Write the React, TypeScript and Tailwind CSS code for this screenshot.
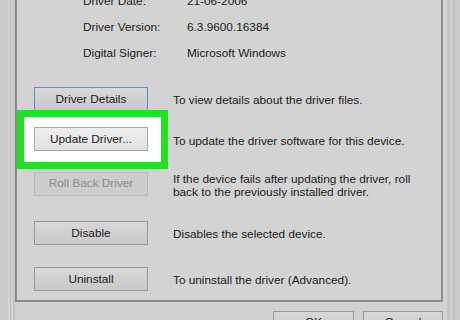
import React from "react";

const Btn = ({
  children,
  variant = "normal",
  w = "w-[114px]",
  h = "h-[24px]",
}: {
  children: React.ReactNode;
  variant?: "normal" | "focus" | "light" | "disabled";
  w?: string;
  h?: string;
}) => {
  const styles: Record<string, string> = {
    normal:
      "border-[#9a9a9a] bg-gradient-to-b from-[#d8d8d8] to-[#c9c9c9] text-[#1c1c1c]",
    focus:
      "border-[#5b8fc6] bg-gradient-to-b from-[#d9d9d9] to-[#c8c8c8] text-[#1c1c1c]",
    light:
      "border-[#a9a9a9] bg-gradient-to-b from-[#eeeeee] to-[#e2e2e2] text-[#1c1c1c]",
    disabled: "border-[#bcbcbc] bg-[#cdcdcd] text-[#8b8b8b]",
  };
  return (
    <div
      className={`${w} ${h} shrink-0 border flex items-center justify-center leading-none ${styles[variant]}`}
    >
      <span className="pt-[1px]">{children}</span>
    </div>
  );
};

export default function App() {
  return (
    <div
      className="w-[460px] h-[320px] overflow-hidden flex bg-[#d1d1d1] text-[11.8px] text-[#1b1b1b]"
      style={{ fontFamily: '"Liberation Sans", Arial, sans-serif' }}
    >
      {/* left window frame stripes */}
      <div className="flex h-full shrink-0">
        <div className="w-[8px] bg-[#cbcbcb]" />
        <div className="w-[2px] bg-[#d6d6d6]" />
        <div className="w-[1px] bg-[#bdbdbd]" />
        <div className="w-[2px] bg-[#d2d2d2]" />
        <div className="w-[2px] bg-[#c6c6c6]" />
      </div>

      {/* main column */}
      <div className="flex flex-col w-[428px] shrink-0">
        <div className="relative flex flex-col border-l-2 border-r-2 border-b-2 border-[#8c8c8c] bg-[#d3d3d3] h-[302px] shrink-0">
          {/* info rows */}
          <div className="flex flex-col mt-[-5px] leading-[13px]">
            {[
              ["Driver Date:", "21-06-2006"],
              ["Driver Version:", "6.3.9600.16384"],
              ["Digital Signer:", "Microsoft Windows"],
            ].map(([k, v], i) => (
              <div key={k} className={`flex ${i < 2 ? "h-[26px]" : "h-[13px]"}`}>
                <span className="ml-[66px] w-[104px]">{k}</span>
                <span>{v}</span>
              </div>
            ))}
          </div>

          {/* Driver Details */}
          <div className="flex items-center mt-[27px] ml-[17px]">
            <Btn variant="focus">Driver Details</Btn>
            <span className="ml-[25px] pt-[2px] leading-[13px]">
              To view details about the driver files.
            </span>
          </div>

          {/* Update Driver (highlighted) */}
          <div className="relative flex items-center mt-[16px] ml-[17px]">
            <div className="absolute left-[-17px] top-[-17px] w-[151px] h-[59px] border-[7px] border-[#22e022] bg-white z-10" />
            <div className="relative z-20">
              <Btn variant="light">Update Driver...</Btn>
            </div>
            <span className="ml-[25px] pt-[4px] leading-[13px]">
              To update the driver software for this device.
            </span>
          </div>

          {/* Roll Back */}
          <div className="flex items-center mt-[17px] ml-[17px]">
            <Btn variant="disabled">Roll Back Driver</Btn>
            <span className="ml-[25px] pt-[5px] leading-[13px]">
              If the device fails after updating the driver, roll
              <br />
              back to the previously installed driver.
            </span>
          </div>

          {/* Disable */}
          <div className="flex items-center mt-[22px] ml-[17px]">
            <Btn>Disable</Btn>
            <span className="ml-[25px] pt-[2px] leading-[13px]">
              Disables the selected device.
            </span>
          </div>

          {/* Uninstall */}
          <div className="flex items-center mt-[22px] ml-[17px]">
            <Btn>Uninstall</Btn>
            <span className="ml-[25px] pt-[2px] leading-[13px]">
              To uninstall the driver (Advanced).
            </span>
          </div>
        </div>

        {/* bottom buttons */}
        <div className="flex justify-end gap-[9px] mt-[9px]">
          <Btn w="w-[81px]" h="h-[23px]">
            OK
          </Btn>
          <Btn w="w-[80px]" h="h-[23px]">
            Cancel
          </Btn>
        </div>
      </div>

      {/* right window frame stripes */}
      <div className="flex h-full shrink-0">
        <div className="w-[4px] bg-[#d4d4d4]" />
        <div className="w-[3px] bg-[#c4c4c4]" />
        <div className="w-[3px] bg-[#cfcfcf]" />
        <div className="w-[2px] bg-[#bdbdbd]" />
        <div className="w-[5px] bg-[#cacaca]" />
      </div>
    </div>
  );
}
